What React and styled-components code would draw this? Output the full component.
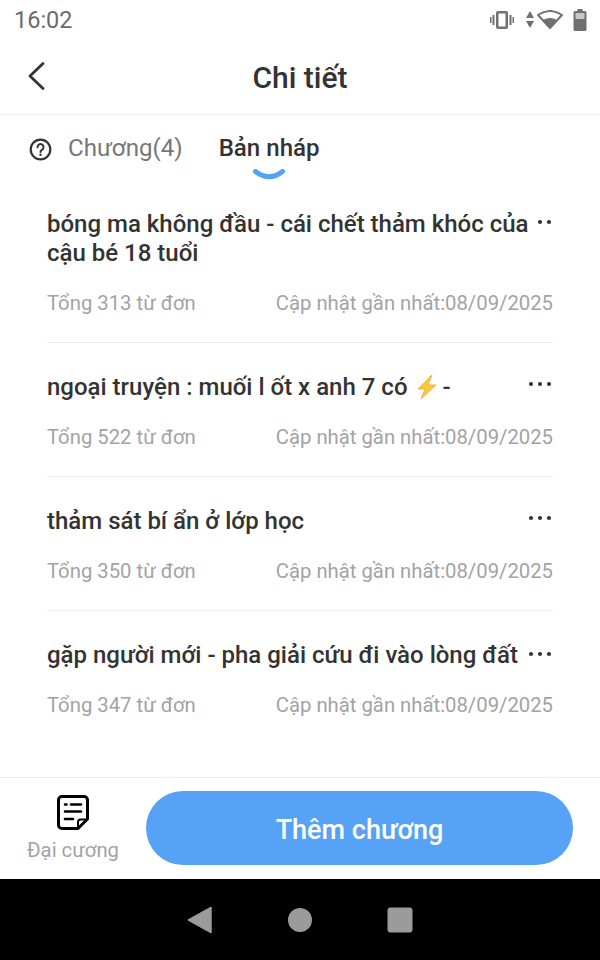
import React from 'react'
import styled,{createGlobalStyle} from 'styled-components'

const Global=createGlobalStyle`
html,body{margin:0;padding:0;background:#fff;}
*{box-sizing:border-box;}
body{font-family:Roboto,"Noto Sans",sans-serif;}
`
const Page=styled.div`
width:600px;
height:960px;
display:flex;
flex-direction:column;
overflow:hidden;
background:#fff;
`
const StatusBar=styled.div`
height:40px;
flex:none;
display:flex;
align-items:center;
justify-content:space-between;
padding:0 13px 0 14px;
color:#6b6b6b;
font-size:23.5px;
`
const StatusIcons=styled.div`
display:flex;
align-items:center;
gap:6px;
`
const Header=styled.header`
height:75px;
flex:none;
position:relative;
display:flex;
align-items:center;
justify-content:center;
border-bottom:1px solid #eeeeee;
`
const Title=styled.h1`
margin:0;
font-size:30px;
font-weight:500;
color:#333;
`
const Back=styled.svg`
position:absolute;
left:27px;
top:21px;
`
const Tabs=styled.div`
height:68px;
flex:none;
display:flex;
align-items:flex-start;
padding:16px 0 0 29px;
`
const Tab=styled.div`
position:relative;
font-size:24.1px;
line-height:34px;
font-weight:${p=>p.active?500:400};
color:${p=>p.active?'#333':'#777'};
margin-left:${p=>p.gap}px;
`
const Smile=styled.svg`
position:absolute;
left:34px;
top:38px;
`
const List=styled.div`
flex:1;
padding:27px 47px 0 47px;
`
const Row=styled.div`
position:relative;
padding-top:${p=>p.first?0:30}px;
padding-bottom:27px;
border-bottom:${p=>p.last?'none':'1px solid #eeeeee'};
`
const RowTitle=styled.div`
position:relative;
z-index:1;
width:fit-content;
max-width:486px;
background:#fff;
font-size:24px;
line-height:29px;
font-weight:500;
color:#333;
`
const Bolt=styled.svg`
vertical-align:-5px;
margin:0 2px 0 1px;
`
const Dots=styled.svg`
position:absolute;
right:1px;
top:${p=>p.top}px;
`
const Meta=styled.div`
display:flex;
justify-content:space-between;
margin-top:23px;
font-size:20.3px;
line-height:24px;
color:#a3a3a3;
`
const Bottom=styled.div`
height:102px;
flex:none;
display:flex;
align-items:flex-start;
border-top:1px solid #eeeeee;
padding:13px 27px 0 27px;
`
const Outline=styled.div`
width:92px;
flex:none;
display:flex;
flex-direction:column;
align-items:center;
font-size:20.3px;
line-height:24px;
color:#a3a3a3;
white-space:nowrap;
gap:8px;
padding-top:4px;
`
const AddButton=styled.button`
margin-left:27px;
width:427px;
height:74px;
border:none;
border-radius:37px;
background:#55a2f6;
color:#fff;
font-family:inherit;
font-size:27px;
font-weight:500;
padding:4px 0 0 0;
`
const NavBar=styled.div`
height:81px;
flex:none;
background:#000;
display:flex;
align-items:center;
justify-content:center;
gap:75px;
`

const rows=[
  {title:'bóng ma không đầu - cái chết thảm khóc của cậu bé 18 tuổi',count:313,dots:9},
  {title:'ngoại truyện : muối l ốt x anh 7 có ',bolt:true,count:522,dots:38},
  {title:'thảm sát bí ẩn ở lớp học',count:350,dots:38},
  {title:'gặp người mới - pha giải cứu đi vào lòng đất',count:347,dots:40},
]

const App=()=>{
  return (
    <Page>
      <Global/>
      <StatusBar>
        <span>16:02</span>
        <StatusIcons>
          <svg width="24" height="20" viewBox="0 0 24 20" fill="#707070">
            <rect x="6" y="1" width="12" height="18" rx="2"/>
            <rect x="8.500" y="3.500" width="7" height="13" fill="#fff"/>
            <rect x="2.500" y="5" width="2" height="10"/>
            <rect x="19.500" y="5" width="2" height="10"/>
            <rect x="0" y="7" width="1.500" height="6"/>
            <rect x="22.500" y="7" width="1.500" height="6"/>
          </svg>
          <svg width="8" height="20" viewBox="0 0 8 20" fill="#707070" style={{marginLeft:6}}>
            <path d="M4 1 8 8H0zM0 11h8l-4 7z"/>
          </svg>
          <svg width="26" height="20" viewBox="0 0 26 20" style={{marginLeft:-3}}>
            <path d="M13 18 1 5Q13-3 25 5z" fill="none" stroke="#707070" strokeWidth="2" strokeLinejoin="round"/>
            <path d="M13 18 6 10Q13 6 20 10z" fill="#707070"/>
          </svg>
          <svg width="14" height="22" viewBox="0 0 14 22" fill="#707070" style={{marginLeft:4}}>
            <path d="M4.500 0h5v2H12a1.500 1.500 0 0 1 1.500 1.500V20.500A1.500 1.500 0 0 1 12 22H2A1.500 1.500 0 0 1 .5 20.500V3.500A1.500 1.500 0 0 1 2 2h2.500z"/>
            <rect x="2.500" y="4" width="9" height="6" fill="#c8c8c8"/>
          </svg>
        </StatusIcons>
      </StatusBar>
      <Header>
        <Back width="20" height="30" viewBox="0 0 20 30" fill="none" stroke="#333" strokeWidth="2.800" strokeLinecap="round" strokeLinejoin="round">
          <path d="M16 2.500 3 15l13 12.500"/>
        </Back>
        <Title>Chi tiết</Title>
      </Header>
      <Tabs>
        <svg width="23" height="23" viewBox="0 0 23 23" fill="none" style={{marginTop:7}}>
          <circle cx="11.500" cy="11.500" r="9.800" stroke="#333" strokeWidth="2.200"/>
          <path d="M8.500 9.200a3 3 0 1 1 4.700 2.400c-1 .7-1.700 1.200-1.700 2.300" stroke="#333" strokeWidth="2" strokeLinecap="round"/>
          <circle cx="11.500" cy="16.700" r="1.200" fill="#333"/>
        </svg>
        <Tab gap={16}>Chương(4)</Tab>
        <Tab active gap={36}>
          Bản nháp
          <Smile width="32" height="12" viewBox="0 0 32 12" fill="none">
            <path d="M2.500 2.500Q16 13 29.500 2.500" stroke="#55a2f6" strokeWidth="5" strokeLinecap="round"/>
          </Smile>
        </Tab>
      </Tabs>
      <List>
        {rows.map((row,i)=>(
          <Row key={row.count} first={i===0} last={i===rows.length-1}>
            <Dots top={row.dots} width="24" height="6" viewBox="0 0 24 6" fill="#333">
              <circle cx="3" cy="3" r="2.100"/>
              <circle cx="12" cy="3" r="2.100"/>
              <circle cx="21" cy="3" r="2.100"/>
            </Dots>
            <RowTitle>
              {row.title}
              {row.bolt && (
                <>
                  <Bolt width="26" height="26" viewBox="0 0 26 26">
                    <path d="M18 1 4 15h7L7 25l15-14h-8z" fill="#f7c93e" stroke="#e8a92c" strokeWidth="0.800"/>
                  </Bolt>
                  -
                </>
              )}
            </RowTitle>
            <Meta>
              <span>Tổng {row.count} từ đơn</span>
              <span>Cập nhật gần nhất:08/09/2025</span>
            </Meta>
          </Row>
        ))}
      </List>
      <Bottom>
        <Outline>
          <svg width="32" height="35" viewBox="0 0 32 35" fill="none" stroke="#000" strokeLinecap="round" strokeLinejoin="round">
            <path d="M5 1.500h22a3.500 3.500 0 0 1 3.500 3.500v19L21 33.500H5A3.500 3.500 0 0 1 1.500 30V5A3.500 3.500 0 0 1 5 1.500z" strokeWidth="3"/>
            <path d="M8 9.500h1.500M14 9.500h10M8 16.500h16M8 24h8" strokeWidth="2.600"/>
            <path d="M21 33v-6a2.500 2.500 0 0 1 2.500-2.500H30" strokeWidth="2"/>
          </svg>
          <span>Đại cương</span>
        </Outline>
        <AddButton>Thêm chương</AddButton>
      </Bottom>
      <NavBar>
        <svg width="26" height="28" viewBox="0 0 26 28" fill="#9b9b9b">
          <path d="M24 1.500v25L1.500 14z" stroke="#9b9b9b" strokeWidth="1.500" strokeLinejoin="round"/>
        </svg>
        <svg width="24" height="24" viewBox="0 0 24 24" fill="#9b9b9b">
          <circle cx="12" cy="12" r="12"/>
        </svg>
        <svg width="26" height="26" viewBox="0 0 26 26" fill="#9b9b9b">
          <rect x="0.500" y="0.500" width="25" height="25" rx="3"/>
        </svg>
      </NavBar>
    </Page>
  )
}

export default App
